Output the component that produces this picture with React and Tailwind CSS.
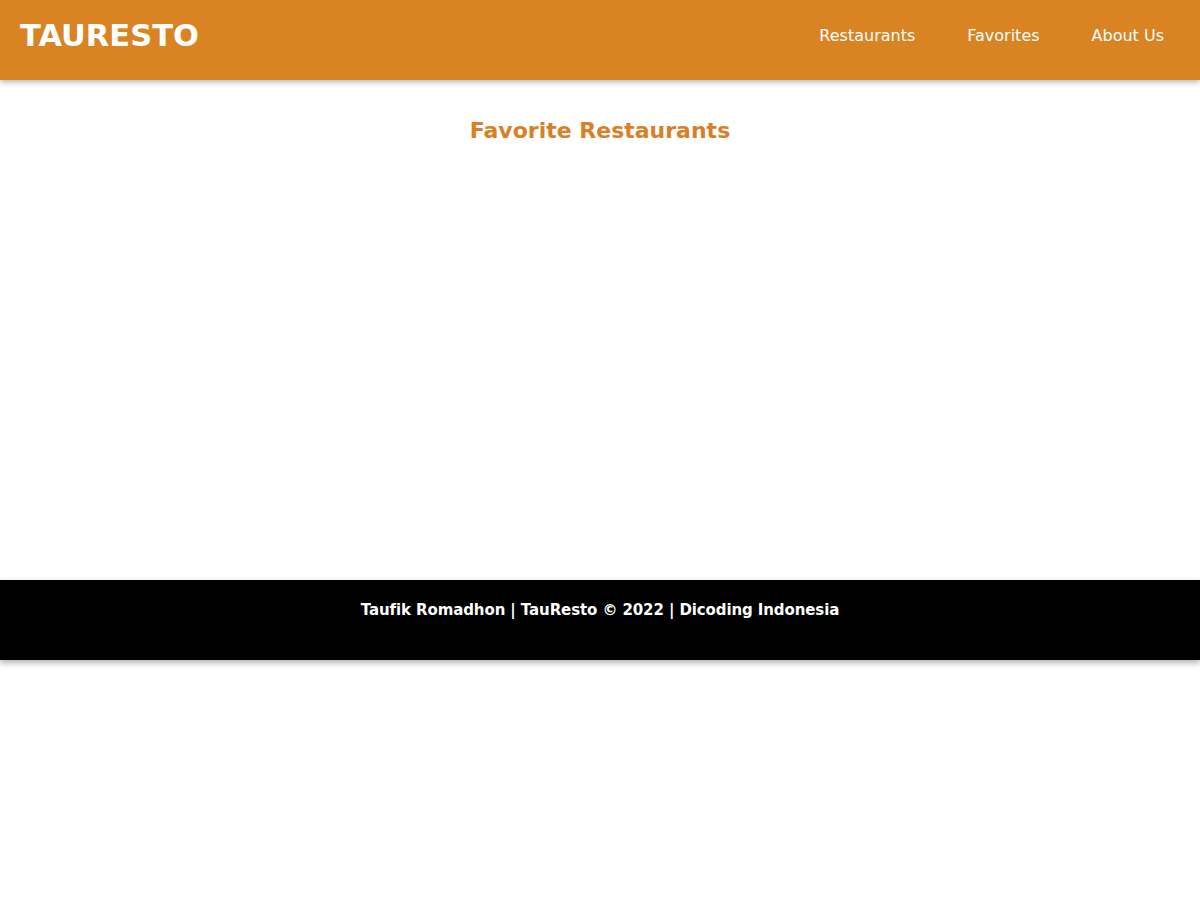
export default function App() {
  return (
    <div className="min-h-[900px] bg-white" style={{ fontFamily: '"DejaVu Sans", sans-serif' }}>
      <header className="h-20 bg-[#d98322] flex items-center justify-between pl-5 pr-9 shadow-[0_2px_6px_rgba(0,0,0,0.3)] relative z-10">
        <h1 className="text-white text-[30.5px] font-bold leading-none -mt-2">TAURESTO</h1>
        <nav className="flex gap-[52px] text-white text-[16px] -mt-2">
          <a>Restaurants</a>
          <a>Favorites</a>
          <a>About Us</a>
        </nav>
      </header>
      <main className="h-[500px] flex flex-col items-center pt-9">
        <h2 className="text-[#d98027] text-[22px] leading-[30px] font-bold">Favorite Restaurants</h2>
      </main>
      <footer className="h-20 bg-black flex justify-center pt-5 shadow-[0_3px_6px_rgba(0,0,0,0.3)]">
        <p className="text-white text-[15px] leading-5 tracking-[-0.1px] font-bold">Taufik Romadhon | TauResto © 2022 | Dicoding Indonesia</p>
      </footer>
    </div>
  );
}
